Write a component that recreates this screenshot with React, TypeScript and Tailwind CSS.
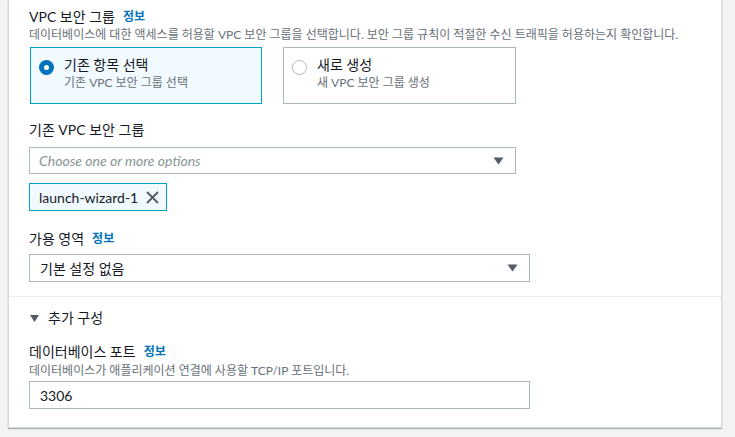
import React from "react";

const font = { fontFamily: 'Lato, "Noto Sans CJK KR", sans-serif' };

function Caret() {
  return (
    <svg width="11" height="8" viewBox="0 0 11 8" className="shrink-0">
      <path d="M0.5 0.5h10L5.5 7.5z" fill="#545b64" />
    </svg>
  );
}

function Label({ text, info }: { text: string; info?: boolean }) {
  return (
    <div className="flex h-5 items-center text-[14px] leading-5">
      <span>{text}</span>
      {info && <span className="ml-2 text-[12px] font-bold leading-5 text-[#0073bb]">정보</span>}
    </div>
  );
}

export default function App() {
  return (
    <div className="min-h-[437px] w-[735px] bg-[#f2f3f3] pl-2 pr-[13px] pb-2 text-[#16191f]" style={font}>
      <div className="bg-white border-x border-b border-[#d5dbdb] shadow-[0_1px_1px_rgba(0,28,36,0.3)]">
        <div className="px-5 pt-[7px] pb-[14px]">
          <Label text="VPC 보안 그룹" info />
          <div className="h-4 text-[12px] leading-4 text-[#687078]">
            데이터베이스에 대한 액세스를 허용할 VPC 보안 그룹을 선택합니다. 보안 그룹 규칙이 적절한 수신 트래픽을 허용하는지 확인합니다.
          </div>

          <div className="mt-[4px] flex gap-[21px] pl-px">
            <div className="flex h-[57px] w-[232px] gap-[10px] border border-[#00a1c9] bg-[#f1faff] pl-[8px] pt-[7px]">
              <div className="mt-[5px] flex h-[15px] w-[15px] items-center justify-center rounded-full bg-[#0073bb]">
                <div className="h-[5px] w-[5px] rounded-full bg-white" />
              </div>
              <div>
                <div className="h-5 text-[14px] leading-5">기존 항목 선택</div>
                <div className="h-4 text-[12px] leading-4 text-[#687078]">기존 VPC 보안 그룹 선택</div>
              </div>
            </div>
            <div className="flex h-[57px] w-[233px] gap-[10px] border border-[#aab7b8] pl-[8px] pt-[7px]">
              <div className="mt-[5px] h-[15px] w-[15px] rounded-full border border-[#aab7b8] bg-white" />
              <div>
                <div className="h-5 text-[14px] leading-5">새로 생성</div>
                <div className="h-4 text-[12px] leading-4 text-[#687078]">새 VPC 보안 그룹 생성</div>
              </div>
            </div>
          </div>

          <div className="mt-[16px]">
            <Label text="기존 VPC 보안 그룹" />
          </div>
          <div className="mt-[7px] flex h-[27px] w-[487px] items-center justify-between border border-[#aab7b8] pl-[9px] pr-[11px]">
            <span className="text-[14px] italic text-[#879596]">Choose one or more options</span>
            <Caret />
          </div>
          <div className="mt-[9px] flex h-[28px] w-[138px] items-center justify-between border border-[#00a1c9] bg-[#f1faff] pl-[9px] pr-[7px]">
            <span className="text-[14px]">launch-wizard-1</span>
            <svg width="13" height="13" viewBox="0 0 13 13">
              <path d="M1 1l11 11M12 1L1 12" stroke="#545b64" strokeWidth="1.8" />
            </svg>
          </div>

          <div className="mt-[18px]">
            <Label text="가용 영역" info />
          </div>
          <div className="mt-[5px] flex h-[28px] w-[501px] items-center justify-between border border-[#aab7b8] pl-[10px] pr-[11px]">
            <span className="text-[14px]">기본 설정 없음</span>
            <Caret />
          </div>
        </div>

        <div className="border-t border-[#eaeded] px-5 pt-[11px] pb-[18px]">
          <div className="flex h-5 items-center gap-[9px] pl-[1px] text-[14px] leading-5">
            <svg width="9" height="7" viewBox="0 0 9 7">
              <path d="M0 0h9L4.5 7z" fill="#545b64" />
            </svg>
            추가 구성
          </div>
          <div className="mt-[14px]">
            <Label text="데이터베이스 포트" info />
          </div>
          <div className="mt-px h-4 text-[12px] leading-4 text-[#687078]">데이터베이스가 애플리케이션 연결에 사용할 TCP/IP 포트입니다.</div>
          <div className="mt-[2px] flex h-[28px] w-[501px] items-center border border-[#aab7b8] pl-[10px] text-[14px]">3306</div>
        </div>
      </div>
    </div>
  );
}
